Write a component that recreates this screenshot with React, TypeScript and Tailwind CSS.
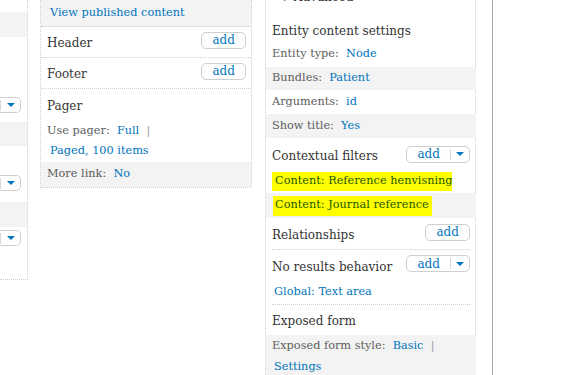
const serif = "font-['DejaVu_Serif','Liberation_Serif',serif]";

function Caret() {
  return (
    <span className="inline-block w-0 h-0 border-l-[4px] border-r-[4px] border-t-[4px] border-l-transparent border-r-transparent border-t-[#0074bd]" />
  );
}

function AddButton({ dropdown = false }: { dropdown?: boolean }) {
  return (
    <div className="flex h-[17px] items-center rounded-[5px] border border-[#cfcfcf] bg-white text-[12px] leading-none text-[#0074bd]">
      <span className="px-[10px]">add</span>
      {dropdown && (
        <>
          <span className="h-[11px] w-px bg-[#d8d8d8]" />
          <span className="flex w-[18px] justify-center">
            <Caret />
          </span>
        </>
      )}
    </div>
  );
}

function Detail({ label, value, extra }: { label: string; value: string; extra?: boolean }) {
  return (
    <span className="whitespace-nowrap text-[11.3px] text-[#5d5d5d]">
      {label}:&nbsp; <span className="text-[#0074bd]">{value}</span>
      {extra && <span className="text-[#999]"> &nbsp;|</span>}
    </span>
  );
}

function LeftDrop() {
  return (
    <div className="flex h-[16px] w-[21px] items-center rounded-r-[5px] border-y border-r border-[#cfcfcf]">
      <span className="h-[11px] w-px bg-[#d8d8d8]" />
      <span className="flex flex-1 justify-center">
        <Caret />
      </span>
    </div>
  );
}

export default function App() {
  return (
    <div className={`flex h-[375px] w-[572px] overflow-hidden bg-white ${serif}`}>
      {/* cut-off column at left */}
      <div className="flex h-[280px] w-[28px] shrink-0 flex-col border-b border-r border-dotted border-[#cfcfcf] [&>*]:shrink-0">
        <div className="h-[12px]" />
        <div className="h-[25px] bg-[#f3f3f3]" />
        <div className="h-[60px]" />
        <LeftDrop />
        <div className="h-[9px]" />
        <div className="h-[24px] bg-[#f3f3f3]" />
        <div className="h-[29px]" />
        <LeftDrop />
        <div className="h-[11px]" />
        <div className="h-[25px] bg-[#f3f3f3]" />
        <div className="h-[3px]" />
        <LeftDrop />
      </div>

      {/* middle column */}
      <div className="ml-[12px] flex h-[188px] w-[212px] shrink-0 flex-col border-x border-b border-dotted border-[#cfcfcf] [&>*]:shrink-0">
        <div className="flex h-[27px] items-center border-b border-dotted border-[#cfcfcf] bg-[#f3f3f3] pl-[9px] text-[11.3px] text-[#0074bd]">
          View published content
        </div>
        <div className="flex h-[31px] items-center justify-between border-b border-dotted border-[#cfcfcf] pl-[6px] pr-[5px] text-[12px] text-[#333]">
          <span className="pt-[1px]">Header</span>
          <div className="-mt-[4px]">
            <AddButton />
          </div>
        </div>
        <div className="flex h-[31px] items-center justify-between border-b border-dotted border-[#cfcfcf] pl-[6px] pr-[5px] text-[12px] text-[#333]">
          <span className="pt-[1px]">Footer</span>
          <div className="-mt-[4px]">
            <AddButton />
          </div>
        </div>
        <div className="flex flex-col pl-[6px]">
          <div className="flex h-[33px] items-center pt-[1px] text-[12px] text-[#333]">Pager</div>
          <div className="flex h-[18px] items-center">
            <Detail label="Use pager" value="Full" extra />
          </div>
          <div className="flex h-[22px] items-center pl-[3px] text-[11.3px] text-[#0074bd]">Paged, 100 items</div>
        </div>
        <div className="flex flex-1 items-center bg-[#f3f3f3] pl-[6px]">
          <Detail label="More link" value="No" />
        </div>
      </div>

      {/* right column */}
      <div className="ml-[13px] flex h-full w-[211px] shrink-0 flex-col border-x border-dotted border-[#cfcfcf] pl-[6px] pr-[5px] text-[#333] [&>*]:shrink-0">
        <div className="h-[5px] overflow-hidden">
          <div className="-mt-[10px] pl-[12px] text-[12px] leading-[15px]">▸ Advanced</div>
        </div>
        <div className="h-[14px]" />
        <div className="flex h-[23px] items-center text-[12px]">Entity content settings</div>
        <div className="flex h-[25px] items-center">
          <Detail label="Entity type" value="Node" />
        </div>
        <div className="-mx-[6px] flex h-[23px] items-center bg-[#f3f3f3] px-[6px]">
          <Detail label="Bundles" value="Patient" />
        </div>
        <div className="flex h-[24px] items-center">
          <Detail label="Arguments" value="id" />
        </div>
        <div className="-mx-[6px] flex h-[24px] items-center bg-[#f3f3f3] px-[6px]">
          <Detail label="Show title" value="Yes" />
        </div>
        <div className="flex h-[32px] items-center justify-between text-[12px]">
          <span className="pt-[3px]">Contextual filters</span>
          <AddButton dropdown />
        </div>
        <div className="flex h-[23px] items-center">
          <span className="flex h-[19px] w-[180px] items-center whitespace-nowrap bg-[#ffff00] pl-[3px] text-[11.3px] text-[#245800]">
            Content: Reference henvisning
          </span>
        </div>
        <div className="-mx-[6px] flex h-[25px] items-center bg-[#f3f3f3] px-[7px]">
          <span className="flex h-[20px] w-[159px] items-center whitespace-nowrap bg-[#ffff00] pl-[2px] text-[11.3px] text-[#245800]">
            Content: Journal reference
          </span>
        </div>
        <div className="flex h-[32px] items-center justify-between border-b border-dotted border-[#cfcfcf] text-[12px]">
          <span className="pt-[3px]">Relationships</span>
          <div className="-mt-[3px]">
            <AddButton />
          </div>
        </div>
        <div className="flex h-[30px] items-center justify-between text-[12px]">
          <span className="whitespace-nowrap pt-[3px]">No results behavior</span>
          <div className="-mt-[3px]">
            <AddButton dropdown />
          </div>
        </div>
        <div className="flex h-[25px] items-center border-b border-dotted border-[#cfcfcf] pl-[2px] text-[11.3px] text-[#0074bd]">
          Global: Text area
        </div>
        <div className="flex h-[30px] items-center pt-[1px] text-[12px]">Exposed form</div>
        <div className="-mx-[6px] flex flex-1 flex-col bg-[#f3f3f3] px-[6px]">
          <div className="flex h-[22px] items-center pt-[1px]">
            <Detail label="Exposed form style" value="Basic" extra />
          </div>
          <div className="flex h-[20px] items-center pl-[2px] text-[11.3px] text-[#0074bd]">Settings</div>
        </div>
      </div>

      <div className="ml-[16px] h-full w-px bg-[#a8a8a8]" />
    </div>
  );
}
